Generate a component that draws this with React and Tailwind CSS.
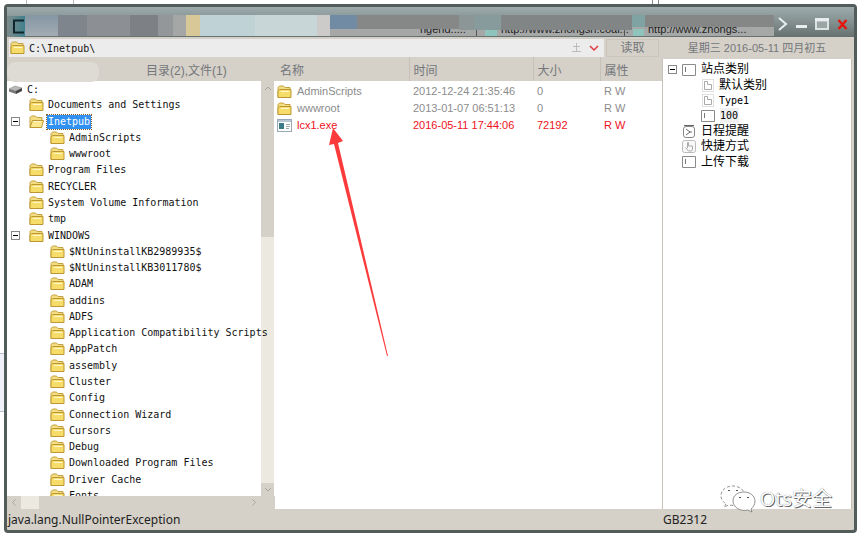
function Folder({ open }) {
  return (
    <svg className="h-[14px] w-[15px] shrink-0" viewBox="0 0 15 14" aria-hidden="true">
      <path d="M1 12.5V2.5L2.5 1h4L8 2.5h5V5" fill="#f3dd83" stroke="#c4a140" />
      {open ? (
        <path d="M1 12.5L3.5 5.5H14.5L12.5 12.5Z" fill="#fbe88d" stroke="#bd9733" />
      ) : (
        <path d="M1 12.5V6L2.5 4.5H14V12.5Z" fill="#f6dc68" stroke="#bd9733" />
      )}
      <path d="M4 6.5h8" stroke="#fff8cf" />
    </svg>
  );
}

function Drive() {
  return (
    <svg className="h-[11px] w-[15px] shrink-0" viewBox="0 0 15 11" aria-hidden="true">
      <path d="M1 5L7 2L14 4L8 7Z" fill="#b9b9b9" stroke="#8b8b8b" strokeWidth=".6" />
      <path d="M1 5L8 7V10L1 7.5Z" fill="#777" />
      <path d="M8 7L14 4V7L8 10Z" fill="#444" />
    </svg>
  );
}

function Expander() {
  return (
    <button type="button" aria-label="-" className="flex h-[9px] w-[9px] shrink-0 items-center justify-center border border-[#888] bg-white">
      <span className="h-px w-[5px] bg-black" />
    </button>
  );
}

function ExeIcon() {
  return (
    <svg className="h-[13px] w-[15px] shrink-0" viewBox="0 0 15 13" aria-hidden="true">
      <rect x=".5" y=".5" width="14" height="12" fill="#fff" stroke="#9aa7b5" />
      <path d="M1 2h13" stroke="#b9c6d4" strokeWidth="2" />
      <rect x="2" y="4" width="5" height="6" fill="#3b7a88" />
      <path d="M9 5.500h4M9 7.500h4M9 9.500h3" stroke="#9aa" />
    </svg>
  );
}

const tree = [
  ["Documents and Settings", 1],
  ["Inetpub", 1, true],
  ["AdminScripts", 2],
  ["wwwroot", 2],
  ["Program Files", 1],
  ["RECYCLER", 1],
  ["System Volume Information", 1],
  ["tmp", 1],
  ["WINDOWS", 1, true],
  ["$NtUninstallKB2989935$", 2],
  ["$NtUninstallKB3011780$", 2],
  ["ADAM", 2],
  ["addins", 2],
  ["ADFS", 2],
  ["Application Compatibility Scripts", 2],
  ["AppPatch", 2],
  ["assembly", 2],
  ["Cluster", 2],
  ["Config", 2],
  ["Connection Wizard", 2],
  ["Cursors", 2],
  ["Debug", 2],
  ["Downloaded Program Files", 2],
  ["Driver Cache", 2],
  ["Fonts", 2],
];

const files = [
  ["AdminScripts", "2012-12-24 21:35:46", "0", "R W"],
  ["wwwroot", "2013-01-07 06:51:13", "0", "R W"],
  ["lcx1.exe", "2016-05-11 17:44:06", "72192", "R W"],
];

function TreeRow({ name, level, expanded }) {
  const selected = name === "Inetpub";
  return (
    <li className={"flex items-center " + (level === 2 ? "pl-[43px]" : "pl-1")}>
      {level === 1 && <span className="flex w-[18px] shrink-0">{expanded && <Expander />}</span>}
      <Folder open={selected} />
      <span
        className={
          "ml-[3px] whitespace-nowrap px-px leading-[14px] " +
          (selected ? "bg-[#3191f2] text-white outline-1 outline-dotted outline-[#8a5a20]" : "")
        }
      >
        {name}
      </span>
    </li>
  );
}

function TitleBar() {
  return (
    <header className="flex h-[30px] shrink-0 items-end bg-linear-to-b from-[#9dabad] via-[#83908f] to-[#66716f]">
      <div className="flex h-[21px] w-[18px] items-center justify-end bg-linear-to-r from-[#7d8c8c] to-[#3f7f8c]">
        <svg className="h-[15px] w-[13px]" viewBox="0 0 13 15" aria-hidden="true">
          <path d="M12 1.500H2V13.500H12" fill="none" stroke="#10262c" strokeWidth="2" />
        </svg>
      </div>
      <div className="flex h-[22px] min-w-0 flex-1 pb-px">
        <span className="w-[33px] bg-linear-to-b from-[#8496a4] to-[#a3acb3]" />
        <span className="w-[29px] bg-[#7f858c]" />
        <span className="w-[43px] bg-[#8c8f93]" />
        <span className="w-[28px] bg-[#7d8084]" />
        <span className="w-[15px] bg-[#94979a]" />
        <span className="w-[13px] bg-[#a5a7a7]" />
        <span className="w-[14px] bg-[#d8c898]" />
        <span className="w-[55px] bg-[#bfd2d6]" />
        <span className="w-[62px] bg-[#c9d6d7]" />
        <span className="w-[13px] bg-[#cdcbca]" />
        <div className="relative min-w-0 flex-1 bg-[#a6a8a8]">
          <nav className="flex h-full items-end font-['Liberation_Sans',sans-serif] text-[11px] leading-[14px] whitespace-nowrap text-[#222]">
            <a href="#a" className="ml-[90px] w-[56px]">ngend.....</a>
            <i className="h-[8px] w-px bg-[#555]" />
            <i className="ml-2 h-[6px] w-[12px] bg-[#8fc4bc]" />
            <a href="#b" className="ml-1 w-[123px]">http://www.zhongsh.coal...</a>
            <i className="h-[8px] w-px bg-[#555]" />
            <i className="ml-2 h-[7px] w-[11px] bg-[#8fc4bc]" />
            <a href="#c" className="ml-1">http://www.zhongs...</a>
          </nav>
          <div className="absolute inset-x-0 top-0 flex items-start">
            <span className="h-[14px] w-[27px] bg-[#728ba5]" />
            <span className="h-[14px] w-[102px] bg-[#868888]" />
            <span className="h-[15px] w-[15px] bg-[#8d9696]" />
            <span className="h-[15px] w-[27px] bg-[#879a9c]" />
            <span className="h-[15px] w-[131px] bg-[#828585]" />
            <span className="h-[12px] w-[13px] bg-[#7fa3a3]" />
            <span className="h-[12px] flex-1 bg-[#858787]" />
          </div>
        </div>
      </div>
      <div className="flex h-[26px] w-[80px] shrink-0 items-center justify-between pr-[6px] pl-[4px]">
        <button type="button" aria-label="›">
          <svg className="h-[14px] w-[10px]" viewBox="0 0 10 14"><path d="M1 1L8 7L1 13" fill="none" stroke="#e8eded" strokeWidth="2" /></svg>
        </button>
        <button type="button" aria-label="_">
          <svg className="h-[14px] w-[11px]" viewBox="0 0 11 14"><path d="M0 9.500h11" stroke="#e8eded" strokeWidth="3" /></svg>
        </button>
        <button type="button" aria-label="□">
          <svg className="h-[12px] w-[14px]" viewBox="0 0 14 12"><path d="M1 2.500H13V11H1Z" fill="#9aa5a4" stroke="#dce3e3" strokeWidth="2" /><path d="M0 1.500H14" stroke="#e8eded" strokeWidth="3" /></svg>
        </button>
        <button type="button" aria-label="×">
          <svg className="h-[11px] w-[11px]" viewBox="0 0 11 11"><path d="M1.500 1L9.500 10M9.500 1L1.500 10" stroke="#e8140c" strokeWidth="2.400" /></svg>
        </button>
      </div>
    </header>
  );
}

const chevron = "M1 4L4 1L7 4";

function LeftTree() {
  return (
    <section className="flex w-[268px] shrink-0 flex-col">
      <h2 className="relative flex h-[24px] shrink-0 items-center pt-[3px] pl-[139px] text-[12px] text-[#73777b]">
        <span className="absolute top-[5px] left-0 h-[20px] w-[92px] rounded-[8px] bg-[#dedad4]" />
        目录(2),文件(1)
      </h2>
      <div className="flex min-h-0 flex-1 bg-white">
        <div className="relative z-10 min-h-0 w-[254px] overflow-y-clip">
          <ul className="grid h-[423px] auto-rows-fr font-['DejaVu_Sans_Mono',monospace] text-[10px] text-[#111]">
            <li className="flex items-center pl-px">
              <Drive />
              <span className="ml-1">C:</span>
            </li>
            {tree.map(([name, level, expanded]) => (
              <TreeRow key={name} name={name} level={level} expanded={expanded} />
            ))}
          </ul>
        </div>
        <div className="flex w-[13px] flex-col bg-[#ebe9e0]">
          <div className="flex h-[156px] justify-center bg-[#d5d1c9] pt-[5px]">
            <svg className="h-[5px] w-[8px]" viewBox="0 0 8 5"><path d={chevron} fill="none" stroke="#aaa69e" /></svg>
          </div>
          <div className="mt-auto flex h-[13px] items-center justify-center bg-[#d5d1c9]">
            <svg className="h-[5px] w-[8px] rotate-180" viewBox="0 0 8 5"><path d={chevron} fill="none" stroke="#aaa69e" /></svg>
          </div>
        </div>
      </div>
      <div className="flex h-[13px] shrink-0 items-center bg-[#d5d1c9]">
        <svg className="mx-[3px] h-[5px] w-[8px] -rotate-90" viewBox="0 0 8 5"><path d={chevron} fill="none" stroke="#aaa69e" /></svg>
        <span className="h-[13px] w-[18px] bg-[#ebe9e0]" />
        <svg className="mr-[17px] ml-auto h-[5px] w-[8px] rotate-90" viewBox="0 0 8 5"><path d={chevron} fill="none" stroke="#aaa69e" /></svg>
      </div>
    </section>
  );
}

function FileList() {
  return (
    <section className="relative min-w-0 flex-1">
      <div className="flex h-full flex-col bg-white">
        <table className="w-full table-fixed border-collapse text-left">
          <colgroup>
            <col className="w-[134px]" />
            <col className="w-[124px]" />
            <col className="w-[67px]" />
            <col />
          </colgroup>
          <thead>
            <tr className="h-[24px] bg-[#d5d0c8] text-[12px] leading-[18px] text-[#73777b]">
              <th className="pt-[3px] pl-[5px] font-normal">名称</th>
              <th className="border-l border-[#c5c1b9] pt-[3px] pl-[4px] font-normal">时间</th>
              <th className="border-l border-[#c5c1b9] pt-[3px] pl-[4px] font-normal">大小</th>
              <th className="border-l border-[#c5c1b9] pt-[3px] pl-[4px] font-normal">属性</th>
            </tr>
          </thead>
          <tbody className="font-['Liberation_Sans',sans-serif] text-[11px] leading-none">
            <tr className="h-[2px]"><td colSpan={4} /></tr>
            {files.map(([name, time, size, attr]) => {
              const exe = name.endsWith(".exe");
              return (
                <tr key={name} className={"h-[17px] " + (exe ? "text-[#ee1122]" : "text-[#8c8c8c]")}>
                  <td>
                    <span className="flex items-center gap-[5px] pl-[2px]">
                      {exe ? <ExeIcon /> : <Folder />}
                      {name}
                    </span>
                  </td>
                  <td className="pl-[4px]">{time}</td>
                  <td className="pl-[4px]">{size}</td>
                  <td className="pl-[4px]">{attr}</td>
                </tr>
              );
            })}
          </tbody>
        </table>
      </div>
      <svg className="absolute top-[69px] left-[50px] h-[232px] w-[66px]" viewBox="325 126 66 232" aria-hidden="true">
        <path d="M333 128L343 141L338 143L388 356L387 356L334 144L329 145Z" fill="#fb3b3b" />
      </svg>
    </section>
  );
}

function BoxIcon() {
  return (
    <svg className="h-[12px] w-[14px] shrink-0" viewBox="0 0 14 12" aria-hidden="true">
      <path d="M.5 .5H13.500V11.500H.5Z" fill="#fff" stroke="#8b8b8b" />
      <path d="M3.500 3v5" stroke="#777" />
    </svg>
  );
}

function PageIcon() {
  return (
    <svg className="h-[13px] w-[12px] shrink-0" viewBox="0 0 12 13" aria-hidden="true">
      <rect x=".5" y=".5" width="11" height="12" fill="none" stroke="#c0c0c0" strokeDasharray="1 1" />
      <path d="M2.500 10.500V2.500H5.500V5.500H9.500V10.500Z" fill="none" stroke="#aaa" />
    </svg>
  );
}

function ClockIcon() {
  return (
    <svg className="h-[13px] w-[14px] shrink-0" viewBox="0 0 14 13" aria-hidden="true">
      <rect x="1.500" y="1.500" width="11" height="11" rx="2.500" fill="#fff" stroke="#888" />
      <path d="M2 .5H12M4 4L8 7L4 10M8 7H10" fill="none" stroke="#666" />
    </svg>
  );
}

function HandIcon() {
  return (
    <svg className="h-[13px] w-[14px] shrink-0" viewBox="0 0 14 13" aria-hidden="true">
      <rect x=".5" y=".5" width="13" height="12" rx="2" fill="#f8f8f8" stroke="#bbb" />
      <path d="M5.500 8V2.500H6.500V6H10.500V9L9.500 11H6.500L3.500 7.500" fill="none" stroke="#aaa" />
    </svg>
  );
}

function SitePanel() {
  const row = "flex items-center gap-[5px]";
  return (
    <aside className="flex w-[192px] shrink-0 flex-col pr-[2px]">
      <p className="flex h-[22px] shrink-0 items-center justify-center text-[11px] whitespace-pre text-[#73777b]">星期三 2016-05-11 四月初五</p>
      <div className="flex-1 border-x border-[#c6c2ba] bg-white pt-[3px] pl-[5px]">
        <ul className="grid h-[108px] auto-rows-fr text-[12px] leading-[15px] text-black">
          <li className={row}><Expander /><BoxIcon />站点类别</li>
          <li className={row + " pl-[34px]"}><PageIcon />默认类别</li>
          <li className={row + " pl-[34px] font-['DejaVu_Sans_Mono',monospace] text-[10px]"}><PageIcon />Type1</li>
          <li className={row + " pl-[33px] font-['DejaVu_Sans_Mono',monospace] text-[10px]"}>
            <BoxIcon /><span className="bg-[#f0f0f0] pr-px">100</span>
          </li>
          <li className={row + " pl-[14px]"}><ClockIcon />日程提醒</li>
          <li className={row + " pl-[14px]"}><HandIcon />快捷方式</li>
          <li className={row + " pl-[14px]"}><BoxIcon />上传下载</li>
        </ul>
      </div>
    </aside>
  );
}

function Watermark() {
  return (
    <div className="absolute right-[22px] bottom-[17px] flex items-center gap-[4px]">
      <svg className="h-[28px] w-[36px]" viewBox="0 0 36 28" aria-hidden="true">
        <g fill="#fff" stroke="#777" strokeWidth=".8">
          <path d="M6 19L4 22L9 20C18 22 25 17 25 11C25 5 19 1 13 1C6 1 1 5 1 11C1 14 3 17 6 19Z" strokeDasharray="3 2" />
          <path d="M31 24L32 27L28 25C20 27 13 22 13 16C13 10 18 7 24 7C30 7 35 11 35 16C35 20 33 22 31 24Z" />
        </g>
        <path d="M8 6q1-2 2 0M16 6q1-2 2 0M19 13q1-2 2 0M27 13q1-2 2 0" fill="none" stroke="#555" />
      </svg>
      <span className="font-['Open_Sans','Noto_Sans_CJK_SC',sans-serif] text-[20px] leading-[24px] text-white [text-shadow:1px_1px_0_#666,0_0_1px_#777]">Ots安全</span>
    </div>
  );
}

export default function App() {
  return (
    <div className="relative h-screen min-h-[300px] bg-white pt-1 pr-[3px] pb-1 pl-1 font-['Liberation_Sans','Noto_Sans_CJK_SC',sans-serif]">
      <i className="absolute top-[353px] left-0 h-[59px] w-1 border-y border-[#b9bfd0] bg-[#eef1fa]" />
      <i className="absolute top-0 left-[26px] h-1 w-[48px] border-x border-[#bbb]" />
      <i className="absolute top-0 left-[652px] h-1 w-[7px] border-x border-[#888]" />
      <main className="relative flex h-full flex-col overflow-hidden rounded-[4px] border-3 border-[#525d5b] bg-[#d5d0c8]">
        <TitleBar />
        <div className="flex min-h-0 flex-1">
          <div className="flex min-w-0 flex-1 flex-col">
            <form className="mt-[2px] flex h-[18px] shrink-0 items-center pr-[3px] pl-[2px] text-[12px]">
              <label className="flex h-full min-w-0 flex-1 items-center gap-[4px] bg-[#ececec] pl-px">
                <Folder />
                <input aria-label="C:\Inetpub\" defaultValue="C:\Inetpub\" className="min-w-0 flex-1 bg-transparent font-['DejaVu_Sans_Mono',monospace] text-[10px] text-[#111] outline-none" />
                <svg className="mr-1 h-[10px] w-[28px]" viewBox="0 0 28 10" aria-hidden="true">
                  <path d="M4.500 0V8M1 3.500H8M0 8.500H9" stroke="#bbb" fill="none" />
                  <path d="M18 3L22 7L26 3" stroke="#e2383c" strokeWidth="1.500" fill="none" />
                </svg>
              </label>
              <button type="button" className="ml-[2px] h-full w-[53px] border border-[#cac6bd] leading-none text-[#73777b]">读取</button>
            </form>
            <div className="flex min-h-0 flex-1">
              <LeftTree />
              <FileList />
            </div>
          </div>
          <SitePanel />
        </div>
        <footer className="flex h-[21px] shrink-0 items-center font-['Noto_Sans',sans-serif] text-[12px] text-[#222]">
          <span className="flex-1 pl-px">java.lang.NullPointerException</span>
          <span className="w-[191px]">GB2312</span>
        </footer>
        <Watermark />
      </main>
    </div>
  );
}
